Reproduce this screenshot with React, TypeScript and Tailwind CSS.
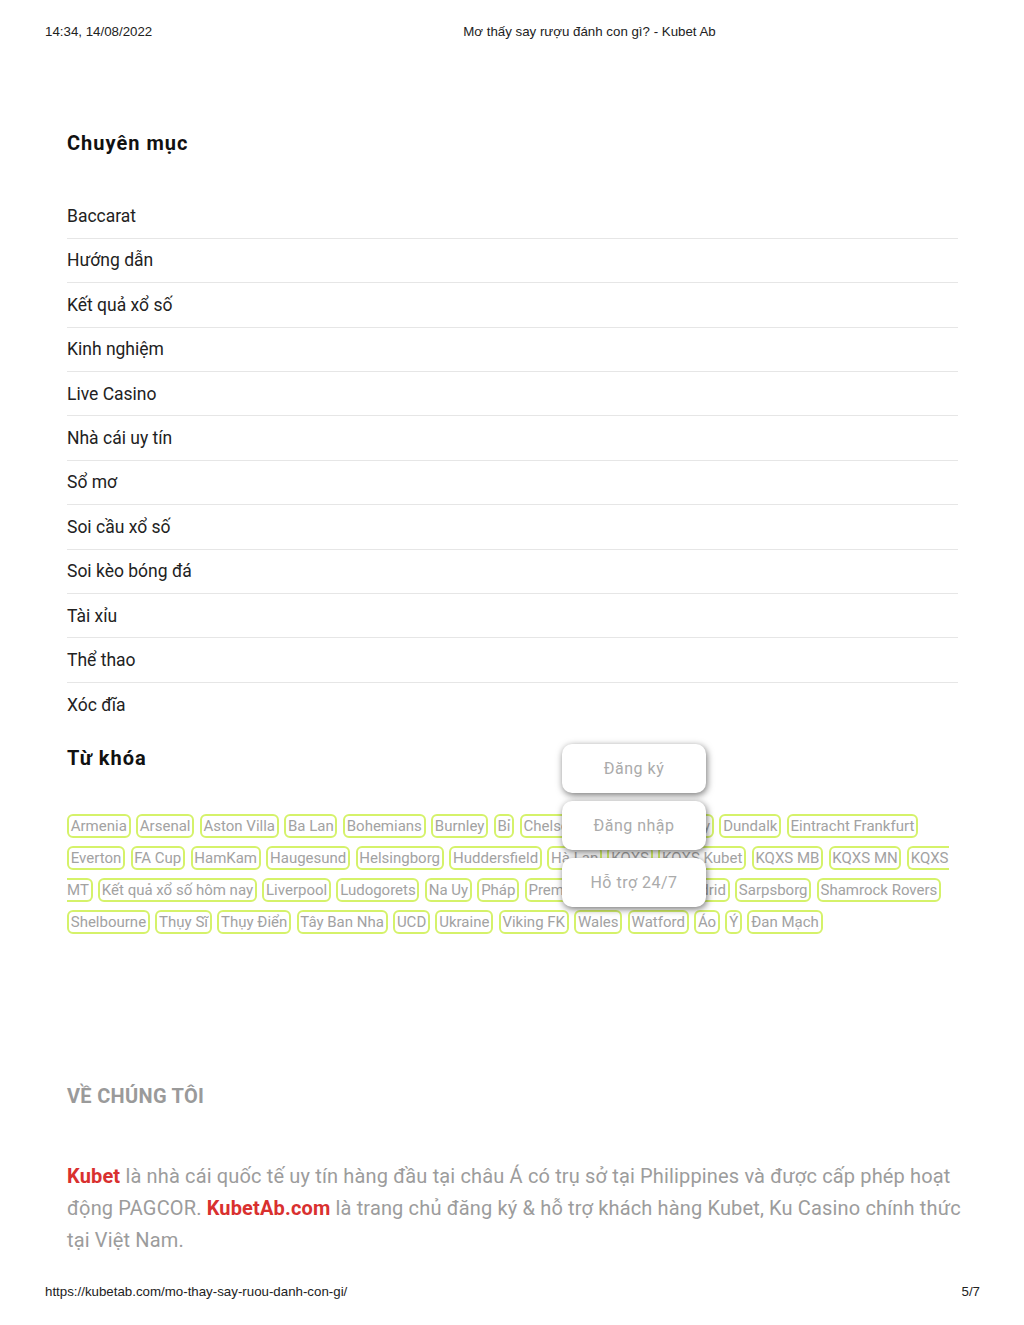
import React from 'react';

const categories = [
  'Baccarat',
  'Hướng dẫn',
  'Kết quả xổ số',
  'Kinh nghiệm',
  'Live Casino',
  'Nhà cái uy tín',
  'Sổ mơ',
  'Soi cầu xổ số',
  'Soi kèo bóng đá',
  'Tài xỉu',
  'Thể thao',
  'Xóc đĩa',
];

const tagRows: string[][] = [
  ['Armenia', 'Arsenal', 'Aston Villa', 'Ba Lan', 'Bohemians', 'Burnley', 'Bỉ', 'Chelsea', 'Cúp C1', 'Coventry', 'Dundalk', 'Eintracht Frankfurt'],
  ['Everton', 'FA Cup', 'HamKam', 'Haugesund', 'Helsingborg', 'Huddersfield', 'Hà Lan', 'KQXS', 'KQXS Kubet', 'KQXS MB', 'KQXS MN', '|KQXS'],
  ['MT|', 'Kết quả xổ số hôm nay', 'Liverpool', 'Ludogorets', 'Na Uy', 'Pháp', 'Premier League', 'Real Madrid', 'Sarpsborg', 'Shamrock Rovers'],
  ['Shelbourne', 'Thụy Sĩ', 'Thụy Điển', 'Tây Ban Nha', 'UCD', 'Ukraine', 'Viking FK', 'Wales', 'Watford', 'Áo', 'Ý', 'Đan Mạch'],
];

function Tag({ label }: { label: string }) {
  // "|KQXS" = opening half of a tag that wraps to next line, "MT|" = closing half
  if (label.startsWith('|')) {
    return (
      <span className="h-[24px] flex items-center border-2 border-r-0 border-[#d5f26a] rounded-l-[6px] pl-[1.75px] whitespace-nowrap">
        {label.slice(1)}
      </span>
    );
  }
  if (label.endsWith('|')) {
    return (
      <span className="h-[24px] flex items-center border-2 border-l-0 border-[#d5f26a] rounded-r-[6px] pr-[1.75px] whitespace-nowrap">
        {label.slice(0, -1)}
      </span>
    );
  }
  return (
    <span className="h-[24px] flex items-center border-2 border-[#d5f26a] rounded-[6px] px-[1.75px] whitespace-nowrap">
      {label}
    </span>
  );
}

function FloatButton({ label, top }: { label: string; top: string }) {
  return (
    <div
      className={`absolute left-[562px] ${top} w-[144px] h-[49px] rounded-[10px] bg-white flex items-center justify-center text-[16px] text-[#ababab] tracking-[0.5px] shadow-[1px_2px_7px_rgba(0,0,0,0.55)]`}
    >
      {label}
    </div>
  );
}

export default function App() {
  return (
    <div className="relative w-[1024px] h-[1325px] bg-white overflow-hidden font-['Roboto',sans-serif]">
      {/* print header */}
      <div className="flex px-[45px] pt-[24px] h-[40px] text-[13.3px] leading-[16px] text-[#222] font-['Liberation_Sans',Arial,sans-serif]">
        <span>14:34, 14/08/2022</span>
        <span className="ml-[311px]">Mơ thấy say rượu đánh con gì? - Kubet Ab</span>
      </div>

      <div className="ml-[67px] w-[891px]">
        <h2 className="mt-[91px] text-[20px] leading-[24px] font-bold tracking-[1px] text-[#111]">Chuyên mục</h2>

        <ul className="mt-[39.5px]">
          {categories.map((c, i) => (
            <li
              key={c}
              className={`h-[44.4px] flex items-center text-[17.5px] text-[#222] ${i < categories.length - 1 ? 'border-b border-[#e6e6e6]' : ''}`}
            >
              {c}
            </li>
          ))}
        </ul>

        <h2 className="mt-[18.6px] text-[20px] leading-[24px] font-bold tracking-[1px] text-[#111]">Từ khóa</h2>

        <div className="mt-[44px] flex flex-col gap-[8px] text-[15px] text-[#a2a2a2]">
          {tagRows.map((row, i) => (
            <div key={i} className="flex gap-[5.5px]">
              {row.map((t) => (
                <Tag key={t} label={t} />
              ))}
            </div>
          ))}
        </div>

        <h3 className="mt-[150px] text-[20px] leading-[24px] font-bold tracking-[0.3px] text-[#9a9a9a]">
          VỀ CHÚNG TÔI
        </h3>

        <p className="mt-[52px] text-[20px] leading-[32px] tracking-[0.15px] text-[#9c9c9c] whitespace-nowrap">
          <span className="font-bold text-[#d9302f]">Kubet</span> là nhà cái quốc tế uy tín hàng đầu tại châu Á có trụ sở tại
          Philippines và được cấp phép hoạt
          <br />
          động PAGCOR. <span className="font-bold text-[#d9302f]">KubetAb.com</span> là trang chủ đăng ký &amp; hỗ trợ khách
          hàng Kubet, Ku Casino chính thức
          <br />
          tại Việt Nam.
        </p>
      </div>

      {/* print footer */}
      <div className="absolute left-0 right-0 top-[1284px] flex justify-between pl-[45px] pr-[44px] text-[13.3px] leading-[16px] text-[#222] font-['Liberation_Sans',Arial,sans-serif]">
        <span>https://kubetab.com/mo-thay-say-ruou-danh-con-gi/</span>
        <span>5/7</span>
      </div>

      {/* floating action buttons */}
      <FloatButton label="Đăng ký" top="top-[744px]" />
      <FloatButton label="Đăng nhập" top="top-[801px]" />
      <FloatButton label="Hỗ trợ 24/7" top="top-[858px]" />
    </div>
  );
}
